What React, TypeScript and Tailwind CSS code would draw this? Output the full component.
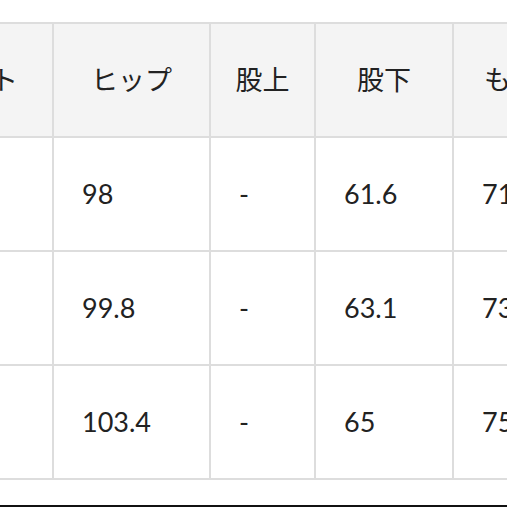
import React from 'react';

const headers = ['ウエスト', 'ヒップ', '股上', '股下', 'もも周り'];

const rows = [
    ['', '98', '-', '61.6', '71'],
    ['', '99.8', '-', '63.1', '73'],
    ['', '103.4', '-', '65', '75'],
];

const App = () => {
    return (
        <div
            className="w-[507px] h-[507px] overflow-hidden bg-white flex flex-col text-[#222]"
            style={{ fontFamily: 'Lato, "Noto Sans CJK JP", sans-serif' }}
        >
            <div className="h-[22px] shrink-0"></div>
            <div className="ml-[-124px] w-max grid grid-cols-[176px_155px_103px_136px_168px] gap-[2px] py-[2px] bg-[#dddddd]">
                {headers.map((h) => (
                    <div key={h} className="h-[112px] bg-[#f4f4f4] flex items-center justify-center text-[27px] font-normal">
                        {h}
                    </div>
                ))}
                {rows.map((row, i) =>
                    row.map((cell, j) => (
                        <div key={`${i}-${j}`} className="h-[112px] bg-white flex items-center pl-[28px] text-[27px]">
                            {cell}
                        </div>
                    ))
                )}
            </div>
            <div className="flex-1"></div>
            <div className="h-[2px] bg-[#111] shrink-0"></div>
        </div>
    );
};

export default App;
